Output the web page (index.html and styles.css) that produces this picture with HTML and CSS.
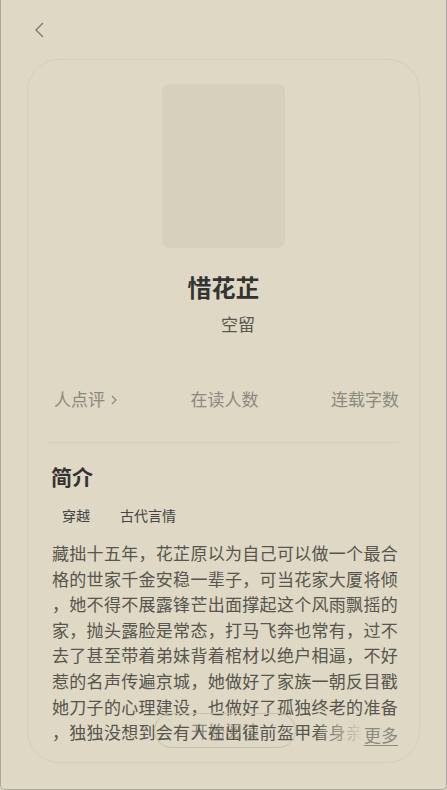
FILE: index.html
```html
<!DOCTYPE html>
<html lang="zh">
	<head>
		<meta charset="utf-8">
		<meta name="viewport" content="width=device-width, initial-scale=1.0">
		<title>惜花芷</title>
		<link rel="stylesheet" href="styles.css">
	</head>
	<body>
		<div class="screen">
			<div class="topbar">
				<svg class="back" width="14" height="18" viewBox="0 0 14 18">
					<polyline points="9,2 2,9 9,16" fill="none" stroke="#7a786e" stroke-width="1.3"/>
				</svg>
			</div>

			<div class="card">
				<div class="cover"></div>
				<h1 class="title">惜花芷</h1>
				<p class="author">空留</p>

				<div class="stats">
					<span class="reviews">人点评
						<svg width="8" height="12" viewBox="0 0 8 12">
							<polyline points="2,2 6,6 2,10" fill="none" stroke="#8c897e" stroke-width="1.2"/>
						</svg>
					</span>
					<span>在读人数</span>
					<span>连载字数</span>
				</div>

				<div class="divider"></div>

				<h2 class="section">简介</h2>
				<div class="tags">
					<span>穿越</span>
					<span>古代言情</span>
				</div>

				<div class="intro">
					<p class="intro-text">藏拙十五年，花芷原以为自己可以做一个最合格的世家千金安稳一辈子，可当花家大厦将倾，她不得不展露锋芒出面撑起这个风雨飘摇的家，抛头露脸是常态，打马飞奔也常有，过不去了甚至带着弟妹背着棺材以绝户相逼，不好惹的名声传遍京城，她做好了家族一朝反目戳她刀子的心理建设，也做好了孤独终老的准备，独独没想到会有人在出征前盔甲着身亲自上门求娶。</p>
					<span class="more">更多</span>
					<div class="read-btn">开始阅读</div>
				</div>
			</div>
		</div>
	</body>
</html>
```

FILE: styles.css
```css
* {
	box-sizing: border-box;
}

body {
	margin: 0;
	background: #ddd8c4;
	font-family: "Noto Sans CJK SC", "Noto Sans", sans-serif;
}

.screen {
	height: 790px;
	border: 1px solid #a9a79e;
	border-top: none;
	border-radius: 0 0 5px 5px;
	background: #ded8c4;
	overflow: hidden;
}

.topbar {
	height: 59px;
	padding: 21px 0 0 33px;
}

.back {
	display: block;
}

.card {
	margin: 0 26px;
	height: 704px;
	border: 1px solid #d5cfbb;
	border-radius: 32px;
	padding: 24px 20px 0 20px;
	display: flex;
	flex-direction: column;
}

.cover {
	width: 123px;
	height: 164px;
	margin: 0 auto;
	background: #d7d0bc;
	border-radius: 7px;
}

.title {
	margin: 22px 0 0;
	font-size: 24px;
	line-height: 34px;
	font-weight: bold;
	color: #333;
	text-align: center;
}

.author {
	margin: 8px 0 0;
	padding-left: 29px;
	font-size: 17px;
	line-height: 24px;
	color: #5a5850;
	text-align: center;
}

.stats {
	margin-top: 51px;
	padding: 0 0 0 6px;
	display: flex;
	justify-content: space-between;
	font-size: 17px;
	line-height: 24px;
	color: #8c897e;
}

.reviews svg {
	margin-left: 1px;
}

.divider {
	margin-top: 31px;
	height: 1px;
	background: #d5cfbb;
}

.section {
	margin: 19px 0 0 3px;
	font-size: 21px;
	line-height: 28px;
	font-weight: bold;
	color: #333;
}

.tags {
	margin: 15px 0 0 14px;
	display: flex;
	gap: 30px;
	font-size: 14px;
	line-height: 20px;
	color: #444;
}

.intro {
	position: relative;
	margin: 15px 0 0 4px;
	width: 348px;
}

.intro-text {
	margin: 0;
	height: 205px;
	overflow: hidden;
	font-size: 17px;
	line-height: 25.6px;
	letter-spacing: 0.3px;
	color: #57554d;
	word-break: break-all;
	line-break: anywhere;
}

.more {
	position: absolute;
	right: 2px;
	bottom: -2px;
	padding-left: 50px;
	font-size: 17px;
	line-height: 25px;
	color: #8c897e;
	text-decoration: underline;
	text-underline-offset: 3px;
	background: linear-gradient(to right, rgba(222, 216, 196, 0), #ded8c4 50px);
}

.read-btn {
	position: absolute;
	left: 102px;
	bottom: -3px;
	width: 142px;
	height: 35px;
	border: 1px solid #c3bfab;
	border-radius: 18px;
	font-size: 17px;
	line-height: 33px;
	text-align: center;
	color: rgba(87, 85, 77, 0.6);
}
```
